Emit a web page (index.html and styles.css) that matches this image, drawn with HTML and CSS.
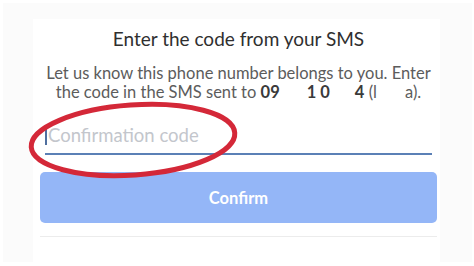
FILE: index.html
```html
<!DOCTYPE html>
<html>
<head>
<meta charset="utf-8">
<link rel="stylesheet" href="styles.css">
</head>
<body>
<div class="panel">
  <div class="card">
    <h1 class="title">Enter the code from your SMS</h1>
    <p class="desc">Let us know this phone number belongs to you. Enter<br>the code in the SMS sent to <b>09</b><span class="gap g1"></span><b>1 0</b><span class="gap g2"></span><b>4</b> (l<span class="gap g3"></span>a).</p>
    <div class="field"><span class="caret"></span><span class="placeholder">Confirmation code</span></div>
    <button class="confirm">Confirm</button>
    <div class="rule"></div>
  </div>
</div>
<svg class="mark" width="474" height="266" viewBox="0 0 474 266">
  <ellipse cx="133" cy="140" rx="102" ry="35" transform="rotate(-4 133 140)" fill="none" stroke="#d42838" stroke-width="5"/>
</svg>
</body>
</html>
```
FILE: styles.css
```css
html, body {
  margin: 0;
  padding: 0;
  background: #ffffff;
  width: 474px;
  height: 266px;
  overflow: hidden;
  font-family: Lato, "Open Sans", sans-serif;
}
.panel {
  margin: 3px 2px 0 3px;
  height: 259px;
  background: #fbfbfb;
  padding-top: 16px;
  box-sizing: border-box;
}
.card {
  margin: 0 32px 0 30px;
  background: #ffffff;
  height: 243px;
  padding: 9px 3px 0 7px;
  box-sizing: border-box;
}
.title {
  margin: 0;
  font-size: 19px;
  line-height: 22px;
  font-weight: 400;
  color: #2f2f2f;
  text-align: center;
}
.desc {
  margin: 14px 0 0;
  font-size: 16.5px;
  line-height: 19px;
  color: #5c5c5c;
  text-align: center;
}
.desc b {
  color: #3a3a3a;
  font-weight: 700;
}
.gap { display: inline-block; }
.g1 { width: 27px; }
.g2 { width: 25px; }
.g3 { width: 28px; }
.field {
  margin: 22px 5px 0;
  padding-bottom: 7px;
  border-bottom: 2px solid #5b80b6;
  display: flex;
  align-items: center;
  height: 22px;
}
.caret {
  width: 2px;
  height: 20px;
  background: #4f6f9f;
  margin-right: 1px;
}
.placeholder {
  font-size: 18.5px;
  line-height: 22px;
  color: #c3c6cc;
}
.confirm {
  display: block;
  width: 100%;
  margin-top: 17px;
  height: 51px;
  border: 0;
  border-radius: 5px;
  background: #94b6f7;
  color: #ffffff;
  font-family: Lato, sans-serif;
  font-weight: 700;
  font-size: 16.5px;
}
.rule {
  margin-top: 13px;
  height: 1px;
  background: #ececec;
}
.mark {
  position: absolute;
  left: 0;
  top: 0;
  pointer-events: none;
}
```
